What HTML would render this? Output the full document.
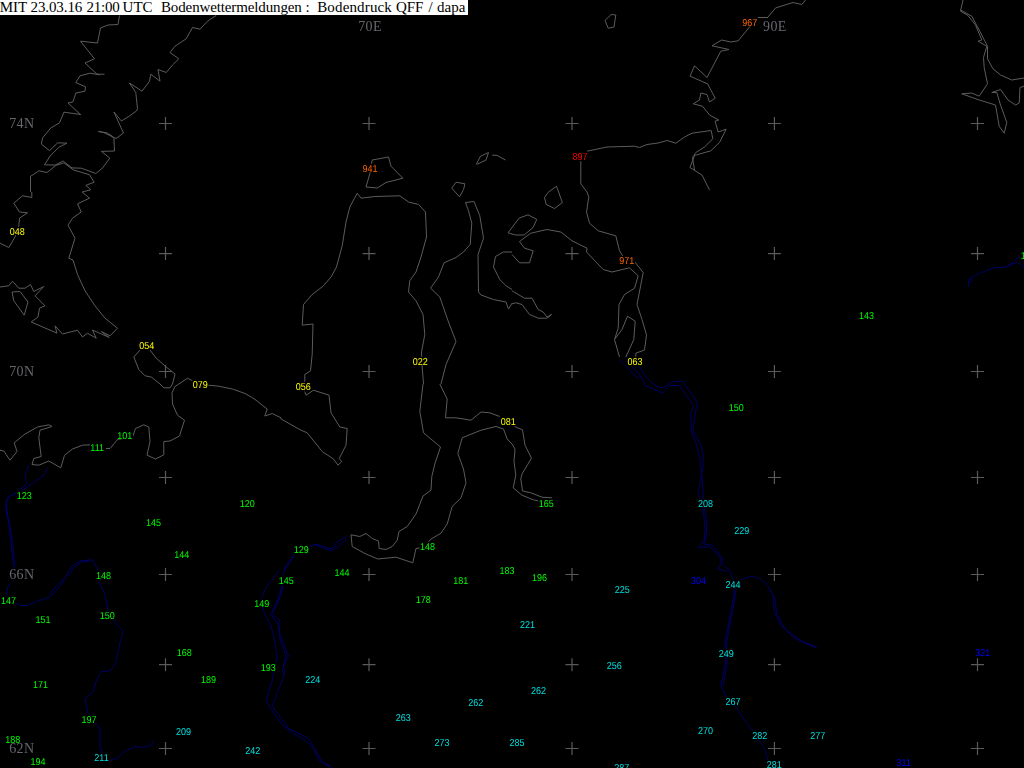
<!DOCTYPE html>
<html><head><meta charset="utf-8"><title>Bodenwettermeldungen</title>
<style>
html,body{margin:0;padding:0;background:#000;overflow:hidden}
#map{position:absolute;left:0;top:0;width:1024px;height:768px;background:#000;overflow:hidden}
#title{position:absolute;left:0;top:0;width:468px;height:15px;background:#fff;color:#000;font:15px/15px "Liberation Serif",serif;white-space:pre;overflow:hidden}
#title span{position:absolute;top:0}
svg{position:absolute;left:0;top:0}
.c{fill:none;stroke:#5c5c5c;stroke-width:1}
.r{fill:none;stroke:#000064;stroke-width:1}
.x{fill:none;stroke:#5a5a5a;stroke-width:1.2}
.n{font:10px "Liberation Sans",sans-serif;opacity:.999;text-rendering:geometricPrecision}
.n rect{fill:#000}
.a{font:14px "Liberation Serif",serif;fill:#66666e;letter-spacing:.4px}
</style></head><body>
<div id="map">
<svg width="1024" height="768" viewBox="0 0 1024 768">
<path class="x" d="M159.0 123.5H172.0 M165.5 117.0V130.0 M159.0 253.6H172.0 M165.5 247.1V260.1 M159.0 371.5H172.0 M165.5 365.0V378.0 M159.0 477.5H172.0 M165.5 471.0V484.0 M159.0 574.5H172.0 M165.5 568.0V581.0 M159.0 664.7H172.0 M165.5 658.2V671.2 M159.0 748.5H172.0 M165.5 742.0V755.0 M362.5 123.5H375.5 M369.0 117.0V130.0 M362.5 253.6H375.5 M369.0 247.1V260.1 M362.5 371.5H375.5 M369.0 365.0V378.0 M362.5 477.5H375.5 M369.0 471.0V484.0 M362.5 574.5H375.5 M369.0 568.0V581.0 M362.5 664.7H375.5 M369.0 658.2V671.2 M362.5 748.5H375.5 M369.0 742.0V755.0 M565.5 123.5H578.5 M572.0 117.0V130.0 M565.5 253.6H578.5 M572.0 247.1V260.1 M565.5 371.5H578.5 M572.0 365.0V378.0 M565.5 477.5H578.5 M572.0 471.0V484.0 M565.5 574.5H578.5 M572.0 568.0V581.0 M565.5 664.7H578.5 M572.0 658.2V671.2 M565.5 748.5H578.5 M572.0 742.0V755.0 M767.9 123.5H780.9 M774.4 117.0V130.0 M767.9 253.6H780.9 M774.4 247.1V260.1 M767.9 371.5H780.9 M774.4 365.0V378.0 M767.9 477.5H780.9 M774.4 471.0V484.0 M767.9 574.5H780.9 M774.4 568.0V581.0 M767.9 664.7H780.9 M774.4 658.2V671.2 M767.9 748.5H780.9 M774.4 742.0V755.0 M971.0 123.5H984.0 M977.5 117.0V130.0 M971.0 253.6H984.0 M977.5 247.1V260.1 M971.0 371.5H984.0 M977.5 365.0V378.0 M971.0 477.5H984.0 M977.5 471.0V484.0 M971.0 574.5H984.0 M977.5 568.0V581.0 M971.0 664.7H984.0 M977.5 658.2V671.2 M971.0 748.5H984.0 M977.5 742.0V755.0"/>
<path class="c" d="M119.5 15.5 L118.0 24.5 L108.0 25.0 L100.5 28.0 L97.5 43.0 L80.5 41.2 L94.5 58.8 L85.0 63.0 L97.0 74.2 L104.5 74.2 M100.0 74.8 L90.0 73.2 L80.0 75.8 L75.8 82.5 L85.5 86.8 L85.0 91.2 L75.8 93.0 L73.0 101.8 L68.0 103.0 L80.5 114.5 M81.1 114.5 L63.9 112.2 L59.5 122.9 L50.8 127.9 L42.6 137.9 L41.4 144.1 L49.5 150.6 L57.6 142.9 L67.0 143.1 L58.9 147.2 L50.1 156.0 L44.5 164.8 L55.1 165.1 L63.2 161.0 L67.0 164.1 L72.0 167.9 L81.4 168.2 L95.8 173.5 L102.6 167.9 L109.8 158.1 L101.4 151.4 L114.5 151.0 L113.9 138.5 L112.0 136.0 L107.0 132.9 L98.2 131.4 M216.2 15.5 L207.5 21.2 L200.0 29.2 L192.5 27.5 L186.2 38.8 L175.0 46.2 L170.0 52.5 L178.8 58.8 L172.5 65.0 L166.2 72.5 L158.0 69.5 L160.0 81.2 L150.8 74.2 L149.5 81.2 L142.0 91.2 L129.5 83.0 L135.8 92.5 L137.5 108.8 M137.5 108.8 L136.4 111.0 L129.5 116.0 L121.4 121.0 L113.9 112.0 L123.5 133.1 L116.0 138.5 L112.0 136.6 L103.9 132.6 L98.2 131.4 M30.5 192.0 L30.5 176.2 M30.5 176.2 L32.0 175.4 L38.9 170.8 L47.0 172.5 L55.8 165.4 L63.9 162.9 L73.2 169.8 L89.5 174.8 L94.1 182.2 L85.8 185.4 L90.8 189.8 L82.0 192.0 M31.8 192.0 L31.8 197.5 L22.5 195.8 L13.8 203.2 L19.5 212.0 L27.5 212.8 L19.5 218.2 L18.8 225.8 L15.0 237.0 L8.8 247.5 L0.0 243.2 M82.0 192.0 L89.5 198.2 L77.5 203.8 L81.2 212.0 L72.5 218.2 L68.0 225.2 L75.0 238.2 L68.8 258.2 L73.0 260.0 L77.5 274.5 L85.0 290.8 L95.0 305.8 L105.0 318.2 L117.5 328.2 L110.0 335.8 L101.2 331.5 L109.2 337.5 L92.5 330.0 L96.2 338.2 L87.5 333.2 L82.5 337.0 L77.5 330.2 L62.5 334.0 L55.0 325.8 L57.0 333.2 L31.2 322.0 L38.0 317.0 L39.5 308.2 L45.0 305.8 L35.0 295.8 L43.8 286.5 L33.8 291.5 L30.5 284.5 L25.0 288.2 L18.8 288.2 L12.5 281.2 L8.8 285.8 L0.0 287.0 M12.0 292.0 L20.0 291.5 L28.0 302.0 L24.2 315.2 L13.8 300.8 L12.0 292.0 M140.0 350.0 L133.8 357.0 L138.8 369.5 L145.0 375.8 L151.2 377.0 L160.0 384.0 M150.0 350.0 L156.2 358.2 L166.2 367.0 L175.0 374.0 L172.5 384.0 M178.8 384.0 L187.5 378.2 L192.5 380.8 M372.2 160.0 L388.5 157.0 L391.0 166.2 L402.8 178.2 L386.0 182.5 L377.2 188.0 L366.0 187.0 L369.8 173.8 L372.2 160.0 M476.5 163.8 L480.5 156.2 L488.5 152.5 L486.0 160.0 L476.5 164.5 M492.2 155.0 L497.2 155.5 L505.5 160.0 M605.0 20.5 L611.2 14.5 L615.8 15.0 L614.0 27.0 L608.2 28.2 L605.0 20.5 M768.0 17.5 L758.2 17.5 L749.5 27.0 L738.2 40.8 L730.8 42.0 L721.5 40.0 L712.0 45.8 L729.0 49.5 L720.8 51.2 L707.0 77.5 L694.5 65.8 L690.0 76.2 L707.5 83.8 L715.2 98.2 L709.5 102.0 L707.0 94.5 L700.8 93.0 L699.5 100.0 L693.2 103.8 L702.5 106.2 L709.5 115.0 L718.8 120.0 L715.0 121.2 L718.2 132.0 L726.2 129.2 L719.5 142.5 L710.8 150.8 L694.5 155.5 L690.0 167.5 L702.0 175.0 L709.5 190.0 M587.0 151.2 L607.0 147.0 L634.5 146.2 L639.5 147.5 L647.0 144.5 L658.2 143.0 L667.0 140.5 L675.8 143.2 L684.5 137.0 L692.0 133.2 L711.2 130.5 L712.8 138.8 L704.5 147.0 L695.8 152.5 L692.5 157.5 L694.5 170.0 M580.8 161.2 L580.8 183.8 L587.0 192.0 M768.0 17.0 L775.5 8.0 L793.0 2.5 L801.8 4.5 L805.5 0.0 M963.0 0.0 L960.5 11.2 L968.0 15.5 L975.5 25.0 L981.8 40.0 L978.0 41.2 L986.8 46.2 L983.5 57.5 L984.2 67.5 L987.5 83.8 L979.2 96.2 L971.8 93.0 L961.8 93.8 L979.2 100.0 L995.5 105.0 L999.2 126.2 L1004.2 133.2 L1006.8 122.5 L1000.5 105.0 L996.8 92.5 L991.8 92.5 L1000.5 89.5 L1008.0 100.0 L1015.5 105.0 L1019.2 103.0 L1020.0 87.5 L1024.0 86.2 M960.5 10.0 L971.8 16.2 L979.2 30.0 L987.5 46.2 L987.5 58.8 L993.0 68.8 L1000.5 75.0 L1011.8 80.0 L1024.0 78.0 M304.8 384.0 L304.8 374.5 L310.5 370.8 L312.2 354.5 L313.0 324.0 L302.2 325.2 L303.5 304.5 L312.2 294.5 L323.5 285.8 L331.0 277.0 L336.5 267.0 L342.2 245.8 L346.0 222.0 L349.8 207.0 L357.2 193.2 L361.0 198.2 L374.8 196.5 L399.8 195.8 L408.5 202.0 L418.5 204.5 L425.5 212.0 L426.5 237.0 L421.0 257.0 L416.0 272.0 L409.8 280.8 L408.5 292.0 L416.0 300.8 L423.0 314.5 L424.8 334.5 L421.5 352.0 L422.2 367.0 L423.5 384.0 M441.0 384.0 L446.0 364.5 L456.0 341.5 L448.5 322.0 L439.8 297.0 L430.5 288.2 L438.5 277.0 L444.0 262.8 L456.0 257.5 L463.5 252.0 L470.2 244.5 L471.8 223.2 L468.5 210.8 L465.5 202.5 L474.0 201.5 L479.8 215.8 L483.5 238.2 L478.0 254.5 L478.5 292.0 L481.0 295.0 L493.5 299.5 L506.0 302.0 L508.5 309.0 L512.0 303.2 M512.0 252.0 L503.5 252.0 L495.5 256.5 L493.5 267.0 L499.8 279.5 L506.0 285.8 L512.0 289.5 M587.0 192.0 L588.8 197.0 L586.5 212.0 L589.5 223.2 L598.2 230.8 L615.8 235.8 L619.5 250.8 L623.2 256.5 M634.5 261.5 L643.2 272.5 L637.0 304.5 L642.0 319.5 L646.5 335.0 L644.5 350.0 L635.8 353.2 L635.8 357.0 M512.0 254.5 L519.5 262.8 L529.5 262.8 L533.2 250.8 L524.5 248.2 L519.5 241.5 L530.8 233.2 L547.0 229.5 L560.8 232.0 L572.0 240.8 L587.0 248.2 L586.5 252.0 L603.2 269.5 L612.0 272.0 L629.5 267.8 L638.2 275.8 L634.5 288.2 L624.5 294.5 L619.0 304.5 L618.2 328.2 L614.5 339.5 L619.5 357.0 M614.5 339.5 L622.0 329.5 L627.5 316.2 L635.2 321.2 L633.8 339.5 L625.8 357.0 M512.0 290.8 L524.5 298.2 L532.0 298.2 L538.2 309.5 L543.2 312.0 L547.0 317.0 L551.5 314.5 L547.0 318.2 L538.2 318.2 L529.5 314.5 L522.0 304.5 L515.8 302.8 L512.0 303.8 M0.0 450.2 L3.8 451.0 L10.0 460.2 L17.0 451.5 L14.2 442.8 L25.0 434.0 L37.5 427.0 L48.8 424.8 L52.0 426.5 L40.0 430.2 L38.8 437.8 L41.2 456.5 L33.8 458.5 L32.0 464.5 L38.8 465.2 L48.8 461.0 L60.8 467.8 L64.5 455.2 L72.5 449.0 L82.5 445.2 L90.5 444.8 L104.5 448.5 L110.0 448.5 L117.5 439.5 L132.5 437.0 L135.5 428.5 L143.8 424.8 L148.8 427.0 L150.0 441.5 L147.0 455.2 L155.5 459.0 L163.8 454.8 L163.8 441.5 L170.0 441.0 L179.5 436.0 L184.5 420.2 L177.5 415.2 L172.5 404.0 L172.0 392.8 L175.0 386.5 L178.8 384.0 M160.0 384.0 L163.8 387.8 L170.0 387.8 L172.5 384.0 M207.5 385.2 L217.5 386.0 L232.5 389.0 L245.0 393.5 L252.5 397.8 L256.0 400.2 M256.0 400.2 L267.2 409.0 L264.8 416.0 L272.2 413.5 L281.0 417.8 L281.0 419.0 L301.0 430.2 L307.2 432.8 L322.2 451.5 L333.5 459.0 L338.0 465.2 L341.8 461.5 L339.2 458.5 L346.0 445.2 L347.2 428.5 L339.8 427.0 L331.0 412.8 L329.0 395.2 L313.5 390.2 L306.0 395.2 L304.8 391.5 M423.0 384.0 L419.8 411.5 L423.5 432.8 L440.5 447.0 L434.8 464.0 L431.8 476.5 L431.0 490.2 L423.0 496.0 L416.0 514.0 L407.2 526.5 L399.0 531.5 L397.2 540.2 L392.2 546.5 L386.0 549.5 L379.2 548.5 L378.5 541.0 L372.2 538.5 L366.0 533.5 L359.8 536.5 L351.0 534.8 L352.2 546.5 L366.0 554.0 L377.8 559.0 L396.0 557.2 L412.8 562.8 L416.0 548.5 L419.8 547.8 M439.8 384.0 L447.2 399.0 L445.5 417.8 L456.0 417.8 L471.0 420.2 L481.0 412.0 L489.8 412.8 L499.8 416.5 M512.0 444.0 L507.2 439.0 L503.5 429.0 L496.0 426.5 L481.0 430.2 L462.2 437.8 L457.8 453.5 L463.5 469.0 L466.0 482.8 L461.0 497.8 L452.2 506.5 L447.2 524.0 L441.0 533.2 L431.0 539.0 L428.5 542.0 M514.5 426.5 L522.5 429.8 L525.0 445.2 L531.5 458.2 L522.0 474.0 L520.8 479.0 L522.5 491.0 L530.8 492.8 L542.0 497.2 L552.0 497.8 M512.0 444.0 L515.0 449.0 L514.0 461.5 L515.8 475.2 L513.2 487.8 L522.0 495.2 L533.2 499.8 L538.2 500.8 M508.0 232.8 L519.2 218.1 L528.0 214.8 L536.8 219.4 L533.0 227.5 L524.2 235.0 L515.5 235.0 L508.0 232.8 M451.8 188.1 L456.1 182.2 L464.9 183.8 L463.6 189.4 L459.5 196.9 L451.8 188.1 M556.5 186.2 L562.4 202.5 L554.5 208.5 L546.1 204.4 L544.5 197.5 L548.0 192.5 L556.5 186.2"/>
<path class="r" d="M1020.0 256.2 L1006.2 267.0 L1000.0 267.5 L993.8 267.8 L985.0 271.2 L975.5 275.5 L969.5 278.8 L968.5 280.5 L968.5 287.0 M1024.0 267.0 L1017.5 262.2 L1006.2 267.0 M969.5 278.8 L972.5 280.2 L969.0 283.0 M28.8 465.2 L25.0 475.2 L27.0 483.5 L17.5 491.5 L7.5 497.8 L5.5 506.5 L8.8 524.0 L11.2 544.0 L12.5 559.0 L13.8 566.5 M47.5 467.8 L43.8 475.2 L32.5 483.5 L22.5 490.2 L10.0 496.0 L6.2 501.5 L7.5 514.0 L11.2 531.5 L13.8 554.0 L14.5 567.8 M66.2 576.0 L71.2 566.5 L80.0 561.0 L92.5 559.8 L98.8 571.5 M68.8 576.0 L73.8 567.8 L81.2 562.0 L91.2 560.5 M347.2 535.8 L336.0 542.8 L333.5 547.8 L328.5 548.2 L316.0 544.0 L309.8 546.5 M346.5 539.0 L338.5 546.5 L331.0 551.0 L319.8 546.5 L314.8 545.2 M294.7 554.0 L290.0 560.3 L285.0 567.0 L283.3 575.3 M294.2 556.7 L288.7 564.0 L285.0 569.5 M279.7 569.5 L273.3 578.7 L266.7 586.2 L261.7 597.0 L262.8 607.8 L265.8 616.2 L270.8 625.3 L274.5 640.0 M637.5 365.8 L640.0 367.5 L646.2 377.5 L656.2 386.2 L663.1 387.8 L672.5 381.9 L682.5 381.0 L697.5 403.1 L695.0 413.8 L693.1 431.2 L701.2 445.0 L703.1 456.0 M631.9 366.6 L640.0 375.0 L645.6 385.6 L662.5 393.1 L670.0 385.6 L679.4 385.6 L693.8 405.6 L690.6 414.4 L691.9 431.9 L696.9 446.2 L699.4 456.0 M619.8 360.0 L631.2 372.0 L638.8 378.5 M703.0 456.0 L703.2 465.2 L698.2 494.0 L704.5 509.0 L707.0 524.0 L705.8 539.0 L698.2 547.8 L709.5 546.5 L719.5 556.5 L722.0 564.0 L729.5 570.2 L732.0 576.0 M699.5 456.0 L702.0 476.5 L703.2 494.0 L703.2 509.0 L705.0 529.0 L704.0 544.0 L712.0 545.2 L723.2 559.0 L718.2 569.0 L727.0 571.5 M66.2 576.0 L61.2 584.8 L50.0 597.2 L37.5 601.0 L27.5 605.5 L20.0 605.5 L15.0 602.2 L6.2 594.8 L7.5 587.2 L10.5 583.0 M65.0 578.5 L57.5 584.8 L48.8 594.8 M98.8 581.0 L105.0 594.8 L107.5 608.5 L113.8 621.0 L123.2 631.0 L120.0 642.2 L116.2 662.2 L110.0 671.0 L101.2 671.5 L96.2 681.0 L93.0 692.2 L85.0 698.5 L87.5 712.2 L96.2 723.5 L100.0 729.8 L100.0 746.0 L102.5 753.5 L110.0 760.5 L117.5 758.0 L125.0 751.0 L135.0 746.8 L142.5 747.2 L151.2 745.5 L154.2 740.5 M274.5 640.0 L277.2 656.0 L272.2 681.0 L266.0 699.8 L269.8 707.2 L281.0 723.5 L293.5 733.5 L306.0 741.0 L313.5 748.5 L318.5 759.8 L331.0 768.0 M283.3 585.3 L280.8 595.3 L276.7 605.3 L271.7 614.0 L280.0 620.3 L278.3 628.7 L282.2 640.0 M282.2 640.0 L288.5 656.0 L283.5 666.0 L284.8 673.5 L272.2 706.0 L288.5 728.5 L308.5 738.5 L316.0 751.0 L322.2 762.2 L331.0 766.0 M282.0 585.3 L279.2 596.2 L274.7 606.2 L270.8 614.5 L276.7 622.0 L279.2 627.0 L280.0 640.0 M280.0 640.0 L286.0 656.0 L282.2 669.8 L283.5 674.8 M732.0 576.0 L734.5 591.0 L732.0 606.0 L728.2 626.0 L725.0 641.0 L725.8 661.0 L720.8 686.0 L725.8 696.0 L737.0 708.5 L747.0 723.5 L753.2 731.0 L764.5 748.5 L768.0 761.0 M735.8 591.0 L733.2 608.5 L729.5 626.0 L726.5 643.5 L727.0 663.5 L723.2 686.0 M732.0 586.0 L740.8 579.8 L752.0 576.0 M752.0 576.0 L759.5 578.5 L768.0 584.8 M768.0 586.0 L773.0 594.8 L774.2 611.0 L780.5 624.8 L789.2 632.2 L800.5 640.5 L816.8 647.2 M769.2 588.5 L775.0 598.5 L776.8 613.5 L784.2 627.2 L793.0 637.2 L805.5 643.5 L816.8 648.0"/>
<g class="n"><rect x="9.5" y="226.8" width="16.0" height="8.4"/><text transform="translate(9.8 235) scale(.9 1)" fill="#ffff00">048</text>
<rect x="362.2" y="163.8" width="16.0" height="8.4"/><text transform="translate(362.6 172) scale(.9 1)" fill="#ff6600">941</text>
<rect x="572.2" y="151.8" width="16.0" height="8.4"/><text transform="translate(572.5 160) scale(.9 1)" fill="#ff0000">897</text>
<rect x="742.0" y="17.8" width="16.0" height="8.4"/><text transform="translate(742.3 26) scale(.9 1)" fill="#ff6600">967</text>
<rect x="412.5" y="356.8" width="16.0" height="8.4"/><text transform="translate(412.8 365) scale(.9 1)" fill="#ffff00">022</text>
<rect x="619.0" y="255.8" width="16.0" height="8.4"/><text transform="translate(619.3 264) scale(.9 1)" fill="#ff6600">971</text>
<rect x="627.2" y="356.8" width="16.0" height="8.4"/><text transform="translate(627.5 365) scale(.9 1)" fill="#ffff00">063</text>
<rect x="858.8" y="310.8" width="16.0" height="8.4"/><text transform="translate(859.0 319) scale(.9 1)" fill="#00ff00">143</text>
<rect x="1020.5" y="250.8" width="6.0" height="8.4"/><text transform="translate(1020.8 259) scale(.9 1)" fill="#00ff00">1</text>
<rect x="90.0" y="442.8" width="16.0" height="8.4"/><text transform="translate(90.3 451) scale(.9 1)" fill="#00ff00">111</text>
<rect x="117.0" y="430.8" width="16.0" height="8.4"/><text transform="translate(117.3 439) scale(.9 1)" fill="#00ff00">101</text>
<rect x="16.5" y="490.8" width="16.0" height="8.4"/><text transform="translate(16.8 499) scale(.9 1)" fill="#00ff00">123</text>
<rect x="145.8" y="517.8" width="16.0" height="8.4"/><text transform="translate(146.1 526) scale(.9 1)" fill="#00ff00">145</text>
<rect x="174.0" y="549.8" width="16.0" height="8.4"/><text transform="translate(174.3 558) scale(.9 1)" fill="#00ff00">144</text>
<rect x="239.5" y="498.8" width="16.0" height="8.4"/><text transform="translate(239.8 507) scale(.9 1)" fill="#00ff00">120</text>
<rect x="95.8" y="570.8" width="16.0" height="8.4"/><text transform="translate(96.0 579) scale(.9 1)" fill="#00ff00">148</text>
<rect x="192.5" y="379.8" width="16.0" height="8.4"/><text transform="translate(192.8 388) scale(.9 1)" fill="#ffff00">079</text>
<rect x="139.0" y="340.8" width="16.0" height="8.4"/><text transform="translate(139.3 349) scale(.9 1)" fill="#ffff00">054</text>
<rect x="295.5" y="381.8" width="16.0" height="8.4"/><text transform="translate(295.8 390) scale(.9 1)" fill="#ffff00">056</text>
<rect x="500.5" y="416.8" width="16.0" height="8.4"/><text transform="translate(500.8 425) scale(.9 1)" fill="#ffff00">081</text>
<rect x="293.5" y="544.8" width="16.0" height="8.4"/><text transform="translate(293.8 553) scale(.9 1)" fill="#00ff00">129</text>
<rect x="419.8" y="541.8" width="16.0" height="8.4"/><text transform="translate(420.1 550) scale(.9 1)" fill="#00ff00">148</text>
<rect x="334.2" y="567.8" width="16.0" height="8.4"/><text transform="translate(334.6 576) scale(.9 1)" fill="#00ff00">144</text>
<rect x="499.2" y="565.8" width="16.0" height="8.4"/><text transform="translate(499.6 574) scale(.9 1)" fill="#00ff00">183</text>
<rect x="728.5" y="402.8" width="16.0" height="8.4"/><text transform="translate(728.8 411) scale(.9 1)" fill="#00ff00">150</text>
<rect x="697.8" y="498.8" width="16.0" height="8.4"/><text transform="translate(698.0 507) scale(.9 1)" fill="#00e0e0">208</text>
<rect x="734.0" y="525.8" width="16.0" height="8.4"/><text transform="translate(734.3 534) scale(.9 1)" fill="#00e0e0">229</text>
<rect x="538.5" y="498.8" width="16.0" height="8.4"/><text transform="translate(538.8 507) scale(.9 1)" fill="#00ff00">165</text>
<rect x="0.8" y="595.8" width="16.0" height="8.4"/><text transform="translate(1.1 604) scale(.9 1)" fill="#00ff00">147</text>
<rect x="35.2" y="614.8" width="16.0" height="8.4"/><text transform="translate(35.5 623) scale(.9 1)" fill="#00ff00">151</text>
<rect x="99.5" y="610.8" width="16.0" height="8.4"/><text transform="translate(99.8 619) scale(.9 1)" fill="#00ff00">150</text>
<rect x="176.5" y="647.8" width="16.0" height="8.4"/><text transform="translate(176.8 656) scale(.9 1)" fill="#00ff00">168</text>
<rect x="200.8" y="674.8" width="16.0" height="8.4"/><text transform="translate(201.1 683) scale(.9 1)" fill="#00ff00">189</text>
<rect x="32.8" y="679.8" width="16.0" height="8.4"/><text transform="translate(33.0 688) scale(.9 1)" fill="#00ff00">171</text>
<rect x="81.2" y="714.8" width="16.0" height="8.4"/><text transform="translate(81.5 723) scale(.9 1)" fill="#00ff00">197</text>
<rect x="175.8" y="726.8" width="16.0" height="8.4"/><text transform="translate(176.1 735) scale(.9 1)" fill="#00e0e0">209</text>
<rect x="5.0" y="734.8" width="16.0" height="8.4"/><text transform="translate(5.3 743) scale(.9 1)" fill="#00ff00">188</text>
<rect x="30.2" y="756.8" width="16.0" height="8.4"/><text transform="translate(30.6 765) scale(.9 1)" fill="#00ff00">194</text>
<rect x="94.0" y="752.8" width="16.0" height="8.4"/><text transform="translate(94.3 761) scale(.9 1)" fill="#00e0e0">211</text>
<rect x="245.0" y="745.8" width="16.0" height="8.4"/><text transform="translate(245.3 754) scale(.9 1)" fill="#00e0e0">242</text>
<rect x="278.5" y="575.8" width="16.0" height="8.4"/><text transform="translate(278.8 584) scale(.9 1)" fill="#00ff00">145</text>
<rect x="254.0" y="598.8" width="16.0" height="8.4"/><text transform="translate(254.3 607) scale(.9 1)" fill="#00ff00">149</text>
<rect x="260.5" y="662.8" width="16.0" height="8.4"/><text transform="translate(260.8 671) scale(.9 1)" fill="#00ff00">193</text>
<rect x="305.0" y="674.8" width="16.0" height="8.4"/><text transform="translate(305.3 683) scale(.9 1)" fill="#00e0e0">224</text>
<rect x="415.5" y="594.8" width="16.0" height="8.4"/><text transform="translate(415.8 603) scale(.9 1)" fill="#00ff00">178</text>
<rect x="453.0" y="575.8" width="16.0" height="8.4"/><text transform="translate(453.3 584) scale(.9 1)" fill="#00ff00">181</text>
<rect x="468.0" y="697.8" width="16.0" height="8.4"/><text transform="translate(468.3 706) scale(.9 1)" fill="#00e0e0">262</text>
<rect x="395.5" y="712.8" width="16.0" height="8.4"/><text transform="translate(395.8 721) scale(.9 1)" fill="#00e0e0">263</text>
<rect x="434.2" y="737.8" width="16.0" height="8.4"/><text transform="translate(434.6 746) scale(.9 1)" fill="#00e0e0">273</text>
<rect x="531.8" y="572.8" width="16.0" height="8.4"/><text transform="translate(532.1 581) scale(.9 1)" fill="#00ff00">196</text>
<rect x="614.5" y="584.8" width="16.0" height="8.4"/><text transform="translate(614.8 593) scale(.9 1)" fill="#00e0e0">225</text>
<rect x="519.8" y="619.8" width="16.0" height="8.4"/><text transform="translate(520.0 628) scale(.9 1)" fill="#00e0e0">221</text>
<rect x="606.5" y="660.8" width="16.0" height="8.4"/><text transform="translate(606.8 669) scale(.9 1)" fill="#00e0e0">256</text>
<rect x="530.8" y="685.8" width="16.0" height="8.4"/><text transform="translate(531.0 694) scale(.9 1)" fill="#00e0e0">262</text>
<rect x="509.2" y="737.8" width="16.0" height="8.4"/><text transform="translate(509.6 746) scale(.9 1)" fill="#00e0e0">285</text>
<rect x="614.0" y="762.8" width="16.0" height="8.4"/><text transform="translate(614.3 771) scale(.9 1)" fill="#00e0e0">287</text>
<rect x="690.8" y="575.8" width="16.0" height="8.4"/><text transform="translate(691.0 584) scale(.9 1)" fill="#0000ff">304</text>
<rect x="725.2" y="579.8" width="16.0" height="8.4"/><text transform="translate(725.5 588) scale(.9 1)" fill="#00e0e0">244</text>
<rect x="718.5" y="648.8" width="16.0" height="8.4"/><text transform="translate(718.8 657) scale(.9 1)" fill="#00e0e0">249</text>
<rect x="725.2" y="696.8" width="16.0" height="8.4"/><text transform="translate(725.5 705) scale(.9 1)" fill="#00e0e0">267</text>
<rect x="697.8" y="725.8" width="16.0" height="8.4"/><text transform="translate(698.0 734) scale(.9 1)" fill="#00e0e0">270</text>
<rect x="752.0" y="730.8" width="16.0" height="8.4"/><text transform="translate(752.3 739) scale(.9 1)" fill="#00e0e0">282</text>
<rect x="975.0" y="647.8" width="16.0" height="8.4"/><text transform="translate(975.3 656) scale(.9 1)" fill="#0000ff">321</text>
<rect x="810.0" y="730.8" width="16.0" height="8.4"/><text transform="translate(810.3 739) scale(.9 1)" fill="#00e0e0">277</text>
<rect x="766.5" y="759.8" width="16.0" height="8.4"/><text transform="translate(766.8 768) scale(.9 1)" fill="#00e0e0">281</text>
<rect x="896.2" y="757.8" width="16.0" height="8.4"/><text transform="translate(896.5 766) scale(.9 1)" fill="#0000ff">311</text></g>
<g class="a"><text x="9.2" y="127.5">74N</text>
<text x="9.2" y="375.5">70N</text>
<text x="9.2" y="579.0">66N</text>
<text x="9.2" y="753.0">62N</text>
<text x="358.2" y="31.2">70E</text>
<text x="763.0" y="31.2">90E</text></g>
</svg>
<div id="title"><span style="left:-0.3px">MIT</span> <span style="left:30.5px;letter-spacing:-.1px">23.03.16</span> <span style="left:86.4px;letter-spacing:-.22px">21:00</span> <span style="left:122.6px">UTC</span>  <span style="left:161px;letter-spacing:-0.13px">Bodenwettermeldungen</span> <span style="left:305.6px">:</span>  <span style="left:317.2px;letter-spacing:0.15px">Bodendruck</span> <span style="left:395.9px">QFF</span> <span style="left:428.5px">/</span> <span style="left:437.1px">dapa</span></div>
</div>
</body></html>
